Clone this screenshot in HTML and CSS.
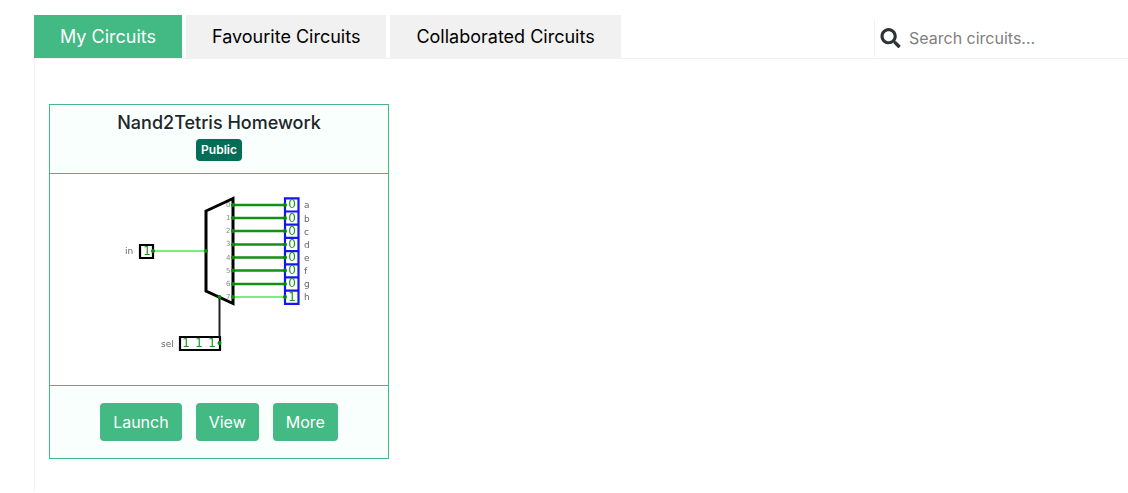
FILE: index.html
```html
<!DOCTYPE html>
<html lang="en">
<head>
  <meta charset="utf-8">
  <title>My Circuits</title>
  <link rel="stylesheet" href="styles.css">
</head>
<body>
  <main class="dashboard">
    <header class="toolbar">
      <nav class="tabs">
        <a class="tab tab-active" href="#mine">My Circuits</a>
        <a class="tab" href="#favourites">Favourite Circuits</a>
        <a class="tab" href="#collaborations">Collaborated Circuits</a>
      </nav>
      <form class="search" role="search">
        <svg class="search-icon" viewBox="0 0 512 512" aria-hidden="true">
          <path d="M505 442.700 405.300 343c-4.500-4.500-10.600-7-17-7H372c27.600-35.300 44-79.700 44-128C416 93.100 322.900 0 208 0S0 93.100 0 208s93.100 208 208 208c48.300 0 92.700-16.400 128-44v16.300c0 6.400 2.500 12.500 7 17l99.700 99.700c9.400 9.400 24.600 9.400 33.900 0l28.300-28.300c9.400-9.400 9.400-24.600.1-34zM208 336c-70.700 0-128-57.200-128-128 0-70.700 57.200-128 128-128 70.700 0 128 57.200 128 128 0 70.700-57.200 128-128 128z"/>
        </svg>
        <input class="search-input" type="search" placeholder="Search circuits..." aria-label="Search circuits">
      </form>
    </header>
    <section class="panel">
      <article class="card">
        <div class="card-head">
          <h2 class="card-title">Nand2Tetris Homework</h2>
          <span class="badge">Public</span>
        </div>
        <svg class="preview" viewBox="0 0 338 211" role="img" aria-label="Demultiplexer circuit">
          <g class="names">
            <text x="75" y="80">in</text>
            <text x="111" y="173">sel</text>
            <text x="254" y="34">a</text>
            <text x="254" y="48">b</text>
            <text x="254" y="61">c</text>
            <text x="254" y="74">d</text>
            <text x="254" y="87">e</text>
            <text x="254" y="100">f</text>
            <text x="254" y="113">g</text>
            <text x="254" y="126">h</text>
          </g>
          <g class="pins">
            <text x="176" y="33">0</text>
            <text x="176" y="46">1</text>
            <text x="176" y="59">2</text>
            <text x="176" y="72">3</text>
            <text x="176" y="86">4</text>
            <text x="176" y="99">5</text>
            <text x="176" y="112">6</text>
            <text x="176" y="125">7</text>
          </g>
          <path class="outline" d="M90 71h13v13H90zM130 163h40v13h-40z"/>
          <path class="select-wire" d="M169.500 123v40"/>
          <path class="mux" d="M156 37l27-12.500v105L156 117z"/>
          <path class="wire-high" d="M103 77h53M183 123h52"/>
          <path class="wire-low" d="M183 31h52M183 44h52M183 57h52M183 70.500h52M183 83.500h52M183 96.500h52M183 110h52"/>
          <path class="outputs" d="M235 24.300h13.500v105.500H235zM235 37.500h13.500M235 50.700h13.500M235 63.900h13.500M235 77.100h13.500M235 90.300h13.500M235 103.400h13.500M235 116.600h13.500"/>
          <path class="dots" d="M103 77h0M156 77h0M169.500 123h0M169.500 169h0M183 31h0M183 44h0M183 57h0M183 70.500h0M183 83.500h0M183 96.500h0M183 110h0M183 123h0M235 31h0M235 44h0M235 57h0M235 70.500h0M235 83.500h0M235 96.500h0M235 110h0M235 123h0"/>
          <g class="values">
            <text x="97" y="81">1</text>
            <text x="136" y="173">1</text>
            <text x="149" y="173">1</text>
            <text x="162" y="173">1</text>
            <text x="242" y="34">0</text>
            <text x="242" y="48">0</text>
            <text x="242" y="61">0</text>
            <text x="242" y="74">0</text>
            <text x="242" y="87">0</text>
            <text x="242" y="100">0</text>
            <text x="242" y="113">0</text>
            <text x="242" y="127">1</text>
          </g>
        </svg>
        <div class="card-actions">
          <a class="button" href="#launch">Launch</a>
          <a class="button" href="#view">View</a>
          <button class="button" type="button">More</button>
        </div>
      </article>
    </section>
  </main>
</body>
</html>
```

FILE: styles.css
```css
* {
  box-sizing: border-box;
}

body {
  margin: 0;
  background: #fff;
  color: #212529;
  font-family: Inter, "Liberation Sans", sans-serif;
  font-size: 16px;
  line-height: 24px;
}

.dashboard {
  padding: 15px 0 0 34px;
}

.toolbar {
  display: flex;
  justify-content: space-between;
  align-items: flex-end;
  border-bottom: 1px solid #f1f1f1;
}

.tabs {
  display: flex;
  gap: 4px;
}

.tab {
  padding: 8px 26px;
  background: #f1f1f1;
  color: #000;
  font-size: 18px;
  font-weight: 400;
  line-height: 27px;
  text-decoration: none;
}

.tab-active {
  background: #43b984;
  color: #fff;
}

.search {
  display: flex;
  align-items: center;
  gap: 8px;
  width: 254px;
  height: 38px;
  margin-bottom: 1px;
  padding-left: 5px;
  border-left: 1px solid #f1f1f1;
}

.search-icon {
  flex: none;
  width: 21px;
  height: 20px;
  fill: #2d3439;
}

.search-input {
  flex: 1;
  min-width: 0;
  padding: 0;
  border: 0;
  outline: 0;
  background: transparent;
  color: #212529;
  font: 400 16px/24px Inter, "Liberation Sans", sans-serif;
}

.search-input::placeholder {
  color: #808080;
}

.panel {
  min-height: calc(100vh - 61px);
  padding: 45px 14px 32px;
  border-left: 1px solid #f1f1f1;
}

.card {
  width: 100%;
  max-width: 340px;
  border: 1px solid #43b984;
}

.card-head {
  display: flex;
  flex-direction: column;
  align-items: center;
  gap: 6px;
  padding: 8px 12px 12px;
  border-bottom: 1px solid #43b984;
  background: #f9fffd;
}

.card-title {
  margin: 0;
  font-size: 18px;
  font-weight: 500;
  line-height: 20px;
}

.badge {
  padding: 4px 5px;
  border-radius: 4px;
  background: #026e57;
  color: #fff;
  font-size: 12px;
  font-weight: 600;
  line-height: 14px;
}

.preview {
  display: block;
  width: 100%;
  filter: blur(0.5px);
  fill: none;
  font-family: "DejaVu Sans", sans-serif;
}

.names {
  fill: #666;
  font-size: 9px;
}

.pins {
  fill: #888;
  font-size: 7px;
}

.values {
  fill: #1c981c;
  font-size: 12px;
  text-anchor: middle;
}

.outline {
  stroke: #000;
  stroke-width: 2.2;
}

.mux {
  stroke: #000;
  stroke-width: 3;
}

.select-wire {
  stroke: #222;
  stroke-width: 2;
}

.wire-high {
  stroke: #7bee7b;
  stroke-width: 2;
}

.wire-low {
  stroke: #149014;
  stroke-width: 2.4;
}

.outputs {
  stroke: #1515ee;
  stroke-width: 2.2;
}

.dots {
  stroke: #078c07;
  stroke-width: 4;
  stroke-linecap: round;
}

.card-actions {
  display: flex;
  justify-content: center;
  gap: 14px;
  padding: 17px 12px;
  border-top: 1px solid #43b984;
  background: #f9fffd;
}

.button {
  padding: 7px 13px;
  border: 0;
  border-radius: 4px;
  background: #43b984;
  color: #fff;
  font: 400 16px/24px Inter, "Liberation Sans", sans-serif;
  text-decoration: none;
}
```
